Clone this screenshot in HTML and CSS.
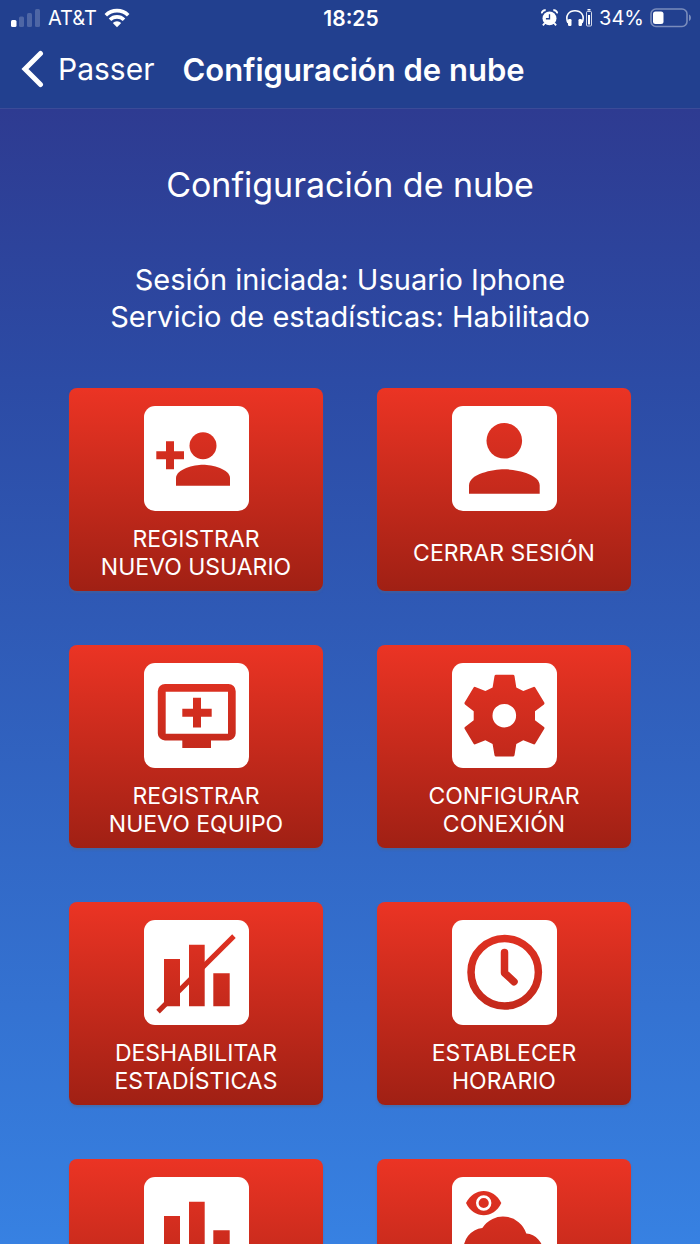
FILE: index.html
```
<!DOCTYPE html>
<html lang="es">
<head>
    <meta charset="UTF-8">
    <meta name="viewport" content="width=device-width, initial-scale=1.0">
    <title>Configuración de nube</title>
    <link rel="stylesheet" href="styles.css">
</head>
<body>
    <header class="top">
        <div class="status-bar">
            <div class="status-left">
                <svg width="30" height="20" viewBox="0 0 30 20" fill="#fff">
                    <rect x="0" y="12" width="5.5" height="7" rx="1.5"/>
                    <rect x="8" y="8.5" width="5" height="10.5" rx="1.5" opacity=".2"/>
                    <rect x="16" y="5" width="5" height="14" rx="1.5" opacity=".2"/>
                    <rect x="24" y="1" width="5" height="18" rx="1.5" opacity=".2"/>
                </svg>
                <span>AT&amp;T</span>
                <svg width="26" height="20" viewBox="0 0 26 20">
                    <path d="M1.8 7.2a16 16 0 0 1 22.4 0M6 11.7a10 10 0 0 1 14 0" fill="none" stroke="#fff" stroke-width="3.6"/>
                    <path d="M13 19.2l-4.2-4.3a6 6 0 0 1 8.4 0z" fill="#fff"/>
                </svg>
            </div>
            <time class="clock">18:25</time>
            <div class="status-right">
                <svg width="17" height="18" viewBox="0 0 18 18">
                    <path d="M1 4.2A3 3 0 0 1 5 1M17 4.2A3 3 0 0 0 13 1M4 14.5l-2 2.2M14 14.5l2 2.2" fill="none" stroke="#fff" stroke-width="2"/>
                    <circle cx="9" cy="9.4" r="7.4" fill="#fff"/>
                    <path d="M9 5v4.8H5.2" fill="none" stroke="#22408f" stroke-width="1.4"/>
                </svg>
                <svg class="headphones" width="27" height="18" viewBox="0 0 27 18">
                    <path d="M2 14C-1.5 6 3.500 1.800 9 1.800S19.500 6 16 14" fill="none" stroke="#fff" stroke-width="1.6"/>
                    <rect x="2" y="10" width="3.5" height="7" rx="1.2" fill="#fff"/>
                    <rect x="12.5" y="10" width="3.5" height="7" rx="1.2" fill="#fff"/>
                    <rect x="20.5" y="2.5" width="5" height="14.5" rx="1" fill="none" stroke="#fff" stroke-opacity=".8"/>
                    <rect x="22" y="6" width="2" height="9.5" fill="#fff"/>
                    <rect x="21.5" y="0" width="3" height="1.5" fill="#fff"/>
                </svg>
                <span>34%</span>
                <svg width="41" height="20" viewBox="0 0 41 20">
                    <rect x="1" y="1" width="36" height="17.5" rx="5" fill="none" stroke="#fff" stroke-opacity=".4" stroke-width="1.6"/>
                    <rect x="3" y="3.5" width="10.5" height="12.5" rx="2.5" fill="#fff"/>
                    <path d="M39 6.5c2.6 1 2.6 5.5 0 6.5z" fill="#fff" opacity=".4"/>
                </svg>
            </div>
        </div>
        <nav class="nav-bar">
            <a class="back" href="#">
                <svg width="25" height="38" viewBox="0 0 25 38">
                    <path d="M20.5 3.500L5 19L20.500 34.500" fill="none" stroke="#fff" stroke-width="5" stroke-linecap="round"/>
                </svg>
                Passer
            </a>
            <span class="nav-title">Configuración de nube</span>
        </nav>
    </header>

    <main class="content">
        <h1>Configuración de nube</h1>
        <p class="session">Sesión iniciada: Usuario Iphone<br>Servicio de estadísticas: Habilitado</p>

        <div class="menu">
            <button class="card" type="button">
                <svg class="icon" viewBox="0 0 105 105">
                    <!-- same gradient as the card, shared by all icons -->
                    <linearGradient id="red" gradientUnits="userSpaceOnUse" x1="0" y1="-18" x2="0" y2="184">
                        <stop offset="0" stop-color="#eb3424"/>
                        <stop offset="1" stop-color="#a02014"/>
                    </linearGradient>
                    <path d="M22 35.3h8v10h10v8H30v10h-8v-10H12.3v-8H22z"/>
                    <circle cx="59" cy="39.7" r="13.5"/>
                    <path d="M32 79.7V72C32 63 50 58.7 59 58.7S86 63 86 72v7.7z"/>
                </svg>
                <span class="label">REGISTRAR<br>NUEVO USUARIO</span>
            </button>

            <button class="card" type="button">
                <svg class="icon" viewBox="0 0 105 105">
                    <circle cx="52.3" cy="34.8" r="17.8"/>
                    <path d="M17 87.7V79.5C17 68 40.5 63.3 52.3 63.3S87.7 68 87.7 79.5V87.7z"/>
                </svg>
                <span class="label">CERRAR SESIÓN</span>
            </button>

            <button class="card" type="button">
                <svg class="icon" viewBox="0 0 105 105">
                    <path fill-rule="evenodd" d="M21 21h63.5a7.2 7.2 0 0 1 7.2 7.2v42a7.2 7.2 0 0 1-7.2 7.2H67V85H38.3v-7.6H21a7.2 7.2 0 0 1-7.2-7.2v-42A7.2 7.2 0 0 1 21 21zM21.7 28.7v42H84v-42z"/>
                    <path d="M49 34.7h8v11h10.7v8H57v10.7h-8V53.7H38.3v-8H49z"/>
                </svg>
                <span class="label">REGISTRAR<br>NUEVO EQUIPO</span>
            </button>

            <button class="card" type="button">
                <svg class="icon" viewBox="0 0 105 105">
                    <path fill-rule="evenodd" d="M44 11.7H61Q62.2 11.7 62.5 13L64.3 24.5L71.3 28L81.5 23.9Q82.6 23.6 83.2 24.5L92.3 39.6Q92.8 40.6 92 41.4L83 48.2V57.3L92 64Q92.8 64.7 92.3 65.8L83.2 80.8Q82.6 81.7 81.5 81.3L71.3 77.3L64.3 81L62.5 92.2Q62.2 93.4 61 93.4H44Q42.8 93.4 42.5 92.2L40.6 81L33.4 77.3L23.3 81.3Q22.2 81.7 21.6 80.8L12.6 65.8Q12.1 64.7 13 64L21.7 57.3V48.2L13 41.4Q12.1 40.6 12.6 39.6L21.6 24.5Q22.2 23.6 23.3 23.9L33.4 28L40.6 24.5L42.5 13Q42.8 11.7 44 11.7zM52.3 40.9a11.8 11.8 0 1 0 0 23.6a11.8 11.8 0 1 0 0-23.6z"/>
                </svg>
                <span class="label">CONFIGURAR<br>CONEXIÓN</span>
            </button>

            <button class="card" type="button">
                <svg class="icon" viewBox="0 0 105 105">
                    <path d="M20 39h16v47.3H20zM45 24.7h15.7v61.6H45zM69.3 53.3h16.4v33H69.3z"/>
                    <path d="M12.3 89.8L88.2 14.3L91.7 18L15.8 93.6z"/>
                </svg>
                <span class="label">DESHABILITAR<br>ESTADÍSTICAS</span>
            </button>

            <button class="card" type="button">
                <svg class="icon" viewBox="0 0 105 105">
                    <circle class="line" cx="52.7" cy="52.3" r="33.7"/>
                    <path class="line" d="M52.5 32.5V53L62 61.7"/>
                </svg>
                <span class="label">ESTABLECER<br>HORARIO</span>
            </button>

            <button class="card" type="button" aria-label="Estadísticas">
                <svg class="icon" viewBox="0 0 105 105">
                    <path d="M20 39h16v47.3H20zM45 24.7h15.7v61.6H45zM69.3 53.3h16.4v33H69.3z"/>
                </svg>
            </button>

            <button class="card" type="button" aria-label="Ver nube">
                <svg class="icon" viewBox="0 0 105 105">
                    <path d="M14 26C22 10 41.5 10 49.3 26C41.5 42.4 22 42.4 14 26z"/>
                    <circle class="pupil" cx="31.7" cy="26" r="6.4"/>
                    <path d="M30.3 51A24.5 24.5 0 0 1 74.3 56.5A18.3 18.3 0 0 1 74 93H35A21 21 0 0 1 30.3 51z"/>
                </svg>
            </button>
        </div>
    </main>
</body>
</html>
```
FILE: styles.css
```
* {
    box-sizing: border-box;
}
body {
    display: flex;
    flex-direction: column;
    height: 100vh;
    margin: 0;
    overflow: hidden;
    font-family: Inter, "Liberation Sans", sans-serif;
    color: #fff;
    background: #2e3b91;
}
.top {
    flex: none;
    background: #22408f;
    border-bottom: 1px solid #3b4b98;
}
.status-bar {
    display: grid;
    grid-template-columns: 1fr auto 1fr;
    align-items: center;
    height: 36px;
    padding: 0 9px 0 11px;
    font-size: 20px;
}
.status-left,
.status-right {
    display: flex;
    align-items: center;
    gap: 7px;
}
.status-right {
    justify-content: flex-end;
    gap: 6px;
}
.headphones {
    margin-left: 2px;
}
.clock {
    font-size: 21px;
    font-weight: 600;
}
.nav-bar {
    display: flex;
    align-items: center;
    gap: 28px;
    height: 72px;
    padding: 0 20px 6px;
    font-size: 31px;
}
.back {
    display: flex;
    align-items: center;
    gap: 13px;
    color: #fff;
    font-size: 30px;
    text-decoration: none;
}
.nav-title {
    font-weight: 600;
}
.content {
    flex: 1;
    padding: 52px 69px;
    overflow-y: auto;
    scrollbar-width: none;
    background: linear-gradient(#2e3b91, #2c4ba5 24%, #3781e2);
    text-align: center;
}
h1 {
    margin: 0;
    font-size: 34px;
    font-weight: 400;
    line-height: 48px;
}
.session {
    margin: 52px 0 53px;
    font-size: 29px;
    line-height: 37px;
}
.menu {
    display: grid;
    grid-template-columns: 1fr 1fr;
    gap: 54px;
}
.card {
    display: flex;
    flex-direction: column;
    align-items: center;
    min-height: 203px;
    padding: 18px 8px 8px;
    border: none;
    border-radius: 8px;
    background: linear-gradient(#eb3424, #a02014);
    box-shadow: 0 2px 2px rgba(80, 100, 140, 0.5);
    color: #fff;
    font-family: inherit;
    font-size: 23px;
    line-height: 28px;
    cursor: pointer;
}
.icon {
    flex: none;
    width: 105px;
    height: 105px;
    border-radius: 11px;
    background: #fff;
    fill: url(#red);
}
.icon .line {
    fill: none;
    stroke: url(#red);
    stroke-width: 7.5;
    stroke-linecap: round;
    stroke-linejoin: round;
}
.icon .pupil {
    stroke: #fff;
    stroke-width: 2.6;
}
.label {
    margin: auto 0;
    padding-top: 12px;
}
```
